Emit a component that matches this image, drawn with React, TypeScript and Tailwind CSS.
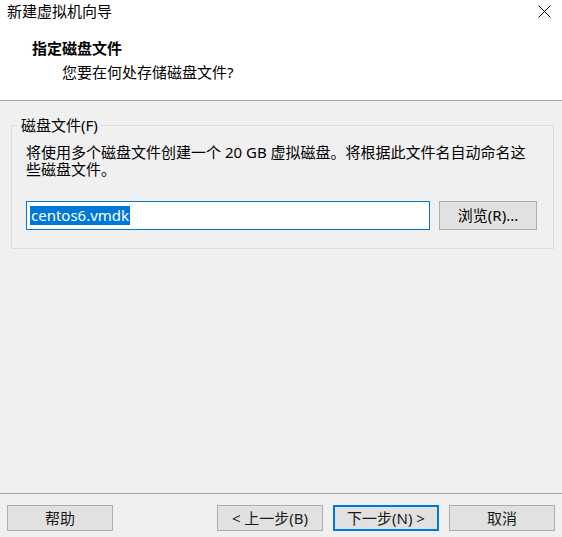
import React from "react";

const font = "font-['Segoe_UI','Noto_Sans','Noto_Sans_CJK_SC',sans-serif]";

const Button = ({ label, primary = false }: { label: string; primary?: boolean }) => (
  <button
    className={
      primary
        ? "w-[106px] h-[26px] bg-[#e1e1e1] border-2 border-[#0078d7] text-[15px] text-[#1a1a1a] leading-none"
        : "w-[106px] h-[26px] bg-[#e1e1e1] border border-[#adadad] text-[15px] text-[#1a1a1a] leading-none"
    }
  >
    {label}
  </button>
);

export default function App() {
  return (
    <div className={`w-[562px] h-[537px] flex flex-col bg-[#f0f0f0] text-[#000] ${font}`}>
      {/* title + header */}
      <div className="h-[101px] bg-white border-b border-[#a0a0a0] flex flex-col">
        <div className="flex justify-between items-center h-[22px] pl-[7px] pr-[11px]">
          <span className="text-[15px] leading-none">新建虚拟机向导</span>
          <svg width="13" height="13" viewBox="0 0 13 13" className="mt-[1px]">
            <path d="M0.5 0.5 L12.5 12.5 M12.5 0.5 L0.5 12.5" stroke="#000" strokeWidth="1" />
          </svg>
        </div>
        <div className="pl-[32px] pt-[16px] text-[15px] font-bold leading-[20px]">指定磁盘文件</div>
        <div className="pl-[62px] pt-[4px] text-[15px] leading-[20px]">您要在何处存储磁盘文件?</div>
      </div>

      {/* group box */}
      <div className="relative mt-[24px] ml-[11px] w-[543px] border border-[#dcdcdc] pt-[18px] pb-[18px] px-[14px]">
        <span className="absolute -top-[10px] left-[6px] px-[3px] bg-[#f0f0f0] text-[15px] leading-[18px]">
          磁盘文件(F)
        </span>
        <p className="text-[15px] leading-[17px] pr-[2px]">
          将使用多个磁盘文件创建一个 20 GB 虚拟磁盘。将根据此文件名自动命名这些磁盘文件。
        </p>
        <div className="flex items-center gap-[9px] mt-[23px]">
          <div className="w-[404px] h-[29px] bg-white border border-[#0078d7] flex items-center pl-[3px]">
            <span className="bg-[#0078d7] text-white text-[15px] leading-[19px] px-[1px]">centos6.vmdk</span>
          </div>
          <button className="w-[98px] h-[29px] bg-[#e1e1e1] border border-[#adadad] text-[15px] leading-none">
            浏览(R)...
          </button>
        </div>
      </div>

      <div className="flex-1" />

      {/* footer */}
      <div className="border-t border-[#a0a0a0] h-[44px] flex items-start pt-[11px] pl-[7px]">
        <Button label="帮助" />
        <div className="ml-[104px] flex gap-[10px]">
          <Button label="< 上一步(B)" />
          <Button label="下一步(N) >" primary />
          <Button label="取消" />
        </div>
      </div>
    </div>
  );
}
